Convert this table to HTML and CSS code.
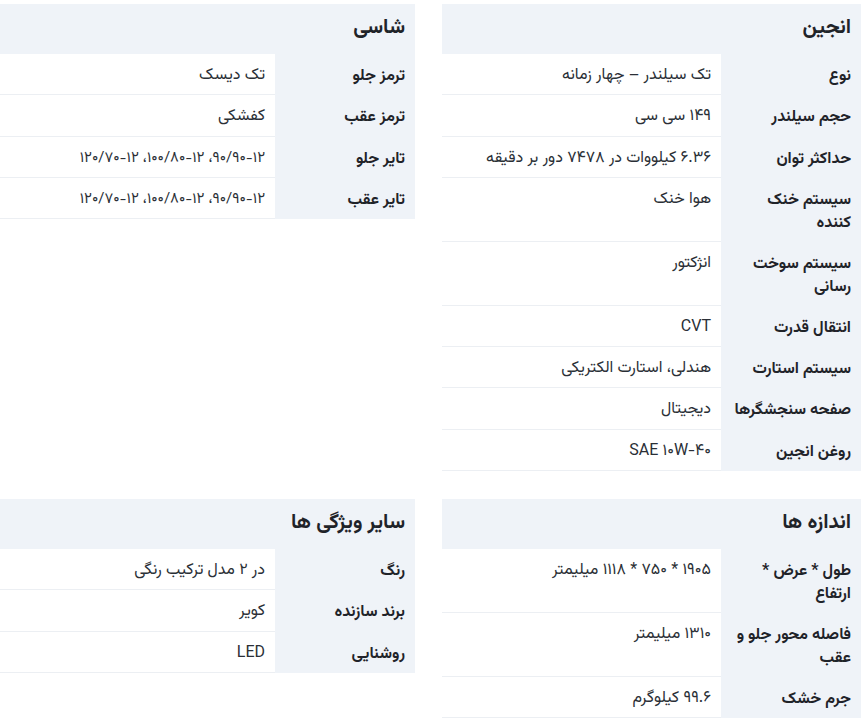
FILE: index.html
```html
<!DOCTYPE html>
<html lang="fa" dir="rtl">
<head>
<meta charset="utf-8">
<title>مشخصات فنی</title>
<link rel="stylesheet" href="styles.css">
</head>
<body>
<div class="specs">
  <section class="spec">
    <h2 class="spec-title">انجین</h2>
    <table class="spec-table">
      <tr><th>نوع</th><td>تک سیلندر – چهار زمانه</td></tr>
      <tr><th>حجم سیلندر</th><td>۱۴۹ سی سی</td></tr>
      <tr><th>حداکثر توان</th><td>۶.۳۶ کیلووات در ۷۴۷۸ دور بر دقیقه</td></tr>
      <tr><th>سیستم خنک کننده</th><td>هوا خنک</td></tr>
      <tr><th>سیستم سوخت رسانی</th><td>انژکتور</td></tr>
      <tr><th>انتقال قدرت</th><td>CVT</td></tr>
      <tr><th>سیستم استارت</th><td>هندلی، استارت الکتریکی</td></tr>
      <tr><th>صفحه سنجشگرها</th><td>دیجیتال</td></tr>
      <tr><th>روغن انجین</th><td>SAE ۱۰W-۴۰</td></tr>
    </table>
  </section>
  <section class="spec">
    <h2 class="spec-title">شاسی</h2>
    <table class="spec-table">
      <tr><th>ترمز جلو</th><td>تک دیسک</td></tr>
      <tr><th>ترمز عقب</th><td>کفشکی</td></tr>
      <tr><th>تایر جلو</th><td class="narrow">۹۰/۹۰-۱۲، ۱۰۰/۸۰-۱۲، ۱۲۰/۷۰-۱۲</td></tr>
      <tr><th>تایر عقب</th><td class="narrow">۹۰/۹۰-۱۲، ۱۰۰/۸۰-۱۲، ۱۲۰/۷۰-۱۲</td></tr>
    </table>
  </section>
  <section class="spec">
    <h2 class="spec-title">اندازه ها</h2>
    <table class="spec-table">
      <tr><th>طول * عرض * ارتفاع</th><td>۱۹۰۵ * ۷۵۰ * ۱۱۱۸ میلیمتر</td></tr>
      <tr><th>فاصله محور جلو و عقب</th><td>۱۳۱۰ میلیمتر</td></tr>
      <tr><th>جرم خشک</th><td>۹۹.۶ کیلوگرم</td></tr>
    </table>
  </section>
  <section class="spec">
    <h2 class="spec-title">سایر ویژگی ها</h2>
    <table class="spec-table">
      <tr><th>رنگ</th><td>در ۲ مدل ترکیب رنگی</td></tr>
      <tr><th>برند سازنده</th><td>کویر</td></tr>
      <tr><th>روشنایی</th><td>LED</td></tr>
    </table>
  </section>
</div>
</body>
</html>
```

FILE: styles.css
```css
html, body {
  margin: 0;
  padding: 0;
  background: #ffffff;
  overflow: hidden;
}

body {
  font-family: "Vazirmatn", "Noto Sans Arabic", "DejaVu Sans", sans-serif;
  color: #222831;
}

.specs {
  display: grid;
  grid-template-columns: 1fr 1fr;
  column-gap: 27px;
  row-gap: 28px;
  align-items: start;
  margin: 4px 7px 0 -4px;
}

.spec {
  min-width: 0;
}

.spec-title {
  margin: 0;
  height: 50px;
  box-sizing: border-box;
  padding: 0 10px 2px;
  display: flex;
  align-items: center;
  background: #eff3f8;
  font-size: 20.5px;
  font-weight: 700;
  color: #1f2329;
}

.spec-table {
  width: 100%;
  border-collapse: collapse;
  table-layout: fixed;
}

.spec-table th {
  width: 140px;
  box-sizing: border-box;
  background: #eff3f8;
  text-align: right;
  vertical-align: top;
  padding: 11px 10px 6px;
  font-size: 16px;
  font-weight: 700;
  line-height: 23px;
  color: #1f2329;
  border-bottom: 1px solid #eff3f8;
}

.spec-table td {
  text-align: right;
  vertical-align: top;
  padding: 10px 10px 7.3px;
  font-size: 16px;
  line-height: 23px;
  color: #2a2f36;
  border-bottom: 1px solid #eceff3;
}

.spec-table td.narrow {
  font-size: 15px;
}
```
